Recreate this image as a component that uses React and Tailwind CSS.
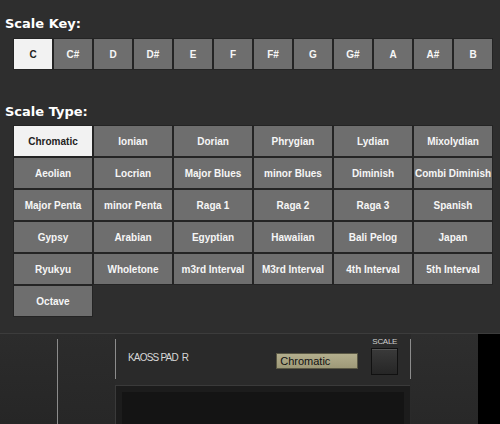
import React from "react";

const keys = ["C", "C#", "D", "D#", "E", "F", "F#", "G", "G#", "A", "A#", "B"];

const types = [
    "Chromatic", "Ionian", "Dorian", "Phrygian", "Lydian", "Mixolydian",
    "Aeolian", "Locrian", "Major Blues", "minor Blues", "Diminish", "Combi Diminish",
    "Major Penta", "minor Penta", "Raga 1", "Raga 2", "Raga 3", "Spanish",
    "Gypsy", "Arabian", "Egyptian", "Hawaiian", "Bali Pelog", "Japan",
    "Ryukyu", "Wholetone", "m3rd Interval", "M3rd Interval", "4th Interval", "5th Interval",
    "Octave",
];

// One cell of the picker grid
const Cell = ({label, active}) => (
    <button
        className={`h-[32px] flex items-center justify-center border border-[#242424] font-['Liberation_Sans',Arial,sans-serif] font-bold text-[10px] whitespace-nowrap ${
            active ? "bg-[#f2f2f2] text-[#222]" : "bg-[#6e6e6e] text-[#f6f6f6]"
        }`}
    >
        {label}
    </button>
);

const Heading = ({children}) => (
    <h2 className="font-['DejaVu_Sans',Verdana,sans-serif] font-bold text-[13px] text-white leading-none">
        {children}
    </h2>
);

const Device = () => (
    <div className="h-[91px] flex bg-[#2a2a2a] border-t border-[#3c3c3c] font-['Liberation_Sans',Arial,sans-serif]">
        {/* left bay */}
        <div className="w-[57px] shrink-0 bg-gradient-to-b from-[#2c2c2c] to-[#262626]"/>
        <div className="w-px shrink-0 mt-[5px] bg-[#8c8c8c]"/>
        <div className="w-[57px] shrink-0 bg-gradient-to-b from-[#2c2c2c] to-[#272727]"/>

        {/* centre module */}
        <div className="w-[295px] shrink-0 flex flex-col">
            <div className="h-[51px] flex items-start">
                <div className="w-px h-[40px] mt-[5px] bg-[#8c8c8c]"/>
                <span className="ml-[12px] mt-[19px] text-[10px] leading-none tracking-[-0.8px] text-[#d8d8d8]">
                    KAOSS PAD&nbsp;&nbsp;R
                </span>
                <div className="ml-[88px] mt-[19px] w-[82px] h-[16px] flex items-center pl-[3px] bg-gradient-to-b from-[#b3ae8d] to-[#9e9978] border border-[#5a5845] text-[11px] leading-none text-[#111]">
                    Chromatic
                </div>
                <div className="ml-[13px] mt-[4px] flex flex-col items-center">
                    <span className="text-[8px] leading-none tracking-[-0.3px] text-[#cfcfcf]">SCALE</span>
                    <div className="mt-[2px] w-[27px] h-[27px] bg-gradient-to-b from-[#3a3a3a] to-[#262626] border border-[#111] shadow-[inset_0_1px_0_#555]"/>
                </div>
            </div>
            <div className="flex-1 bg-[#1c1c1c] border-t border-l border-[#3a3a3a] pl-[6px] pt-[6px] pr-[6px]">
                <div className="h-full bg-[#141414]"/>
            </div>
        </div>

        <div className="w-px h-[40px] mt-[5px] shrink-0 bg-[#8c8c8c]"/>
        <div className="w-[67px] shrink-0 bg-gradient-to-b from-[#2e2e2e] to-[#282828]"/>
        <div className="flex-1 bg-black"/>
    </div>
);

export default function App() {
    return (
        <div className="w-[500px] h-[424px] overflow-hidden bg-[#2e2e2e] flex flex-col">
            <div className="h-[333px] shrink-0 flex flex-col pl-[5px] pt-[17px]">
                <Heading>Scale Key:</Heading>
                <div className="ml-[8px] mt-[8px] w-[480px] grid grid-cols-12">
                    {keys.map((k, i) => (
                        <Cell key={k} label={k} active={i === 0}/>
                    ))}
                </div>

                <div className="mt-[35px]">
                    <Heading>Scale Type:</Heading>
                </div>
                <div className="ml-[8px] mt-[7px] w-[480px] grid grid-cols-6">
                    {types.map((t, i) => (
                        <Cell key={t} label={t} active={i === 0}/>
                    ))}
                </div>
            </div>
            <Device/>
        </div>
    );
}
